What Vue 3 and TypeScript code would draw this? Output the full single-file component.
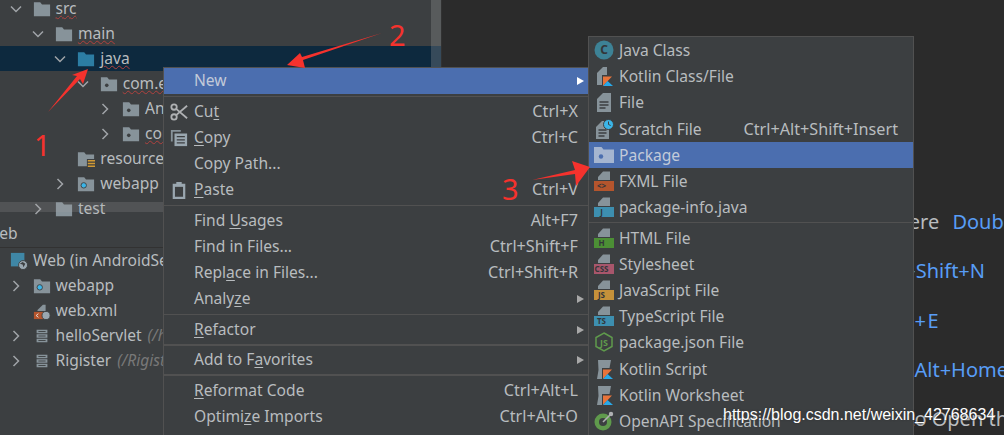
<script setup lang="ts">
type Row = { d: number; label: string; icon: string; chev?: 'down' | 'right'; wavy?: boolean; sel?: boolean; note?: string }
type Item = { sep?: boolean; label?: string; icon?: string; key?: string; more?: boolean; hi?: boolean; band?: string; tag?: string }

const topRows: Row[] = [
  { d: 0, label: 'src', icon: 'folder', chev: 'down', wavy: true },
  { d: 1, label: 'main', icon: 'folder', chev: 'down', wavy: true },
  { d: 2, label: 'java', icon: 'source', chev: 'down', wavy: true, sel: true },
  { d: 3, label: 'com.example', icon: 'pkg', chev: 'down', wavy: true },
  { d: 4, label: 'Android', icon: 'pkg', chev: 'right' },
  { d: 4, label: 'controller', icon: 'pkg', chev: 'right', wavy: true },
  { d: 2, label: 'resources', icon: 'res' },
  { d: 2, label: 'webapp', icon: 'webfolder', chev: 'right' },
  { d: 1, label: 'test', icon: 'folder', chev: 'right' },
]
const lowRows: Row[] = [
  { d: -1, label: 'Web (in AndroidServlet)', icon: 'web' },
  { d: 0, label: 'webapp', icon: 'webfolder', chev: 'right' },
  { d: 0, label: 'web.xml', icon: 'xml' },
  { d: 0, label: 'helloServlet', icon: 'servlet', chev: 'right', note: '(/helloServlet)' },
  { d: 0, label: 'Rigister', icon: 'servlet', chev: 'right', note: '(/Rigister)' },
]
const menu: Item[] = [
  { label: 'New', more: true, hi: true },
  { sep: true },
  { label: 'Cu&t', icon: 'cut', key: 'Ctrl+X' },
  { label: '&Copy', icon: 'copy', key: 'Ctrl+C' },
  { label: 'Copy Path...' },
  { label: '&Paste', icon: 'paste', key: 'Ctrl+V' },
  { sep: true },
  { label: 'Find &Usages', key: 'Alt+F7' },
  { label: 'Find in Files...', key: 'Ctrl+Shift+F' },
  { label: 'Repl&ace in Files...', key: 'Ctrl+Shift+R' },
  { label: 'Analy&ze', more: true },
  { sep: true },
  { label: '&Refactor', more: true },
  { sep: true },
  { label: 'Add to F&avorites', more: true },
  { sep: true },
  { label: '&Reformat Code', key: 'Ctrl+Alt+L' },
  { label: 'Optimi&ze Imports', key: 'Ctrl+Alt+O' },
]
const sub: Item[] = [
  { label: 'Java Class', icon: 'jclass' },
  { label: 'Kotlin Class/File', icon: 'kfile' },
  { label: 'File', icon: 'file' },
  { label: 'Scratch File', icon: 'scratch', key: 'Ctrl+Alt+Shift+Insert' },
  { label: 'Package', icon: 'pkg', hi: true },
  { label: 'FXML File', icon: 'band', band: '#b4552d', tag: '<>' },
  { label: 'package-info.java', icon: 'band', band: '#3d8fb0', tag: 'J' },
  { sep: true },
  { label: 'HTML File', icon: 'band', band: '#4c8f35', tag: 'H' },
  { label: 'Stylesheet', icon: 'band', band: '#a8566c', tag: 'CSS' },
  { label: 'JavaScript File', icon: 'band', band: '#c5913a', tag: 'JS' },
  { label: 'TypeScript File', icon: 'band', band: '#3d8fb0', tag: 'TS' },
  { label: 'package.json File', icon: 'npm' },
  { label: 'Kotlin Script', icon: 'kscript' },
  { label: 'Kotlin Worksheet', icon: 'kscript' },
  { label: 'OpenAPI Specification', icon: 'openapi' },
]
function parts(label = ''): [string, string, string] {
  const i = label.indexOf('&')
  if (i < 0) return [label, '', '']
  return [label.slice(0, i), label.charAt(i + 1), label.slice(i + 2)]
}
const rowPad = (d: number) => {
  const px = `${8.5 + 22.4 * d}px`
  return d < 0 ? { marginLeft: px } : { paddingLeft: px }
}
</script>

<template>
  <div class="screen">
    <aside class="project">
      <div class="tree top">
        <div v-for="r in topRows" :key="r.label" class="row" :class="{ sel: r.sel }" :style="rowPad(r.d)">
          <svg class="chev" viewBox="0 0 14 14"><path v-if="r.chev === 'down'" d="M2 4.5l5 5 5-5" /><path v-else-if="r.chev === 'right'" d="M4.5 2l5 5-5 5" /></svg>
          <svg class="ico" viewBox="0 0 20 20">
            <path :fill="r.icon === 'source' ? '#2c7da3' : '#87939a'" d="M1 2.5h7l2 2.5h9v13H1z" />
            <circle v-if="r.icon === 'pkg'" cx="7.5" cy="11.5" r="2" fill="#3c3f41" />
            <circle v-if="r.icon === 'webfolder'" cx="7.5" cy="11.5" r="3" fill="#3bb5e8" stroke="#3c3f41" />
            <g v-if="r.icon === 'res'"><rect x="11" y="10" width="9" height="9" fill="#3c3f41" /><path d="M12 12h8M12 15h8M12 18h8" stroke="#d19a34" stroke-width="1.7" /></g>
          </svg>
          <span class="name" :class="{ wavy: r.wavy }">{{ r.label }}</span>
        </div>
      </div>
      <div class="pane-title"><span class="name">Web</span></div>
      <div class="tree">
        <div v-for="r in lowRows" :key="r.label" class="row" :style="rowPad(r.d)">
          <svg class="chev" viewBox="0 0 14 14"><path v-if="r.chev === 'right'" d="M4.5 2l5 5-5 5" /></svg>
          <svg class="ico" viewBox="0 0 20 20">
            <g v-if="r.icon === 'web'"><rect x="1" y="1" width="15" height="15" fill="#3f87a6" /><circle cx="14.5" cy="14.5" r="5" fill="#9aa7b0" stroke="#3c3f41" /><path d="M11 13l3 1 1 3 2-4-3-2z" fill="#3c3f41" /></g>
            <g v-else-if="r.icon === 'webfolder'"><path fill="#87939a" d="M1 2.5h7l2 2.5h9v13H1z" /><circle cx="7.5" cy="11.5" r="3" fill="#3bb5e8" stroke="#3c3f41" /></g>
            <g v-else-if="r.icon === 'xml'"><path fill="#87939a" d="M5 9l6-6h3v7H5z" /><rect x="1" y="11" width="12" height="8" fill="#b4552d" /><path d="M6 13l-2.500 2 2.500 2" fill="none" stroke="#e8e8e8" /><circle cx="14.500" cy="15" r="4.500" fill="#9aa7b0" stroke="#3c3f41" /></g>
            <g v-else><path d="M4 3h12v4H4zM4 8h12v4H4zM4 13h12v4H4z" fill="#87939a" /><path d="M6 5h8M6 10h8M6 15h8" stroke="#3c3f41" /></g>
          </svg>
          <span class="name">{{ r.label }}</span>
          <em v-if="r.note" class="note name">{{ r.note }}</em>
        </div>
      </div>
      <div class="vbar"></div>
      <div class="hbar"></div>
    </aside>

    <main class="editor">
      <p class="hint h1">Search Everywhere <b>Double Shift</b></p>
      <p class="hint h2"><b>Ctrl+Shift+N</b></p>
      <p class="hint h3"><b>Ctrl+E</b></p>
      <p class="hint h4"><b>Alt+Home</b></p>
      <p class="hint h5">to Open them</p>
    </main>

    <nav class="menu main-menu">
      <template v-for="(m, i) in menu" :key="i">
        <div v-if="m.sep" class="sep"></div>
        <div v-else class="item" :class="{ hi: m.hi }">
          <svg class="mico" viewBox="0 0 20 20">
            <g v-if="m.icon === 'cut'" fill="none" stroke="#afb1b3" stroke-width="2"><circle cx="4.500" cy="4.500" r="3" /><circle cx="4.500" cy="15.500" r="3" /><path d="M6.800 6.500L19 17M6.800 13.500L19 3" /></g>
            <g v-else-if="m.icon === 'copy'"><path d="M1 1h11v2H3v11H1z" fill="#87939a" /><rect x="5" y="5" width="14" height="14" fill="#9aa7b0" /><path d="M7.500 8.500h9M7.500 12h9M7.500 15.500h9" stroke="#3c3f41" stroke-width="1.300" /></g>
            <g v-else-if="m.icon === 'paste'"><path d="M3 3h4V1h6v2h4v17H3z" fill="#9aa7b0" /><rect x="5.500" y="6.500" width="9" height="11" fill="#3c3f41" /></g>
          </svg>
          <span class="label">{{ parts(m.label)[0] }}<u>{{ parts(m.label)[1] }}</u>{{ parts(m.label)[2] }}</span>
          <span v-if="m.key" class="key">{{ m.key }}</span>
          <i v-if="m.more" class="more"></i>
        </div>
      </template>
    </nav>

    <nav class="menu sub-menu">
      <template v-for="(m, i) in sub" :key="i">
        <div v-if="m.sep" class="sep"></div>
        <div v-else class="item" :class="{ hi: m.hi }">
          <svg class="mico" viewBox="0 0 20 20">
            <g v-if="m.icon === 'jclass'"><circle cx="10" cy="10" r="9.500" fill="#3d8296" /><text x="10" y="14" class="svgtxt big">C</text></g>
            <g v-else-if="m.icon === 'kfile'"><path d="M3 7l6-6h4v18H3z" fill="#87939a" /><path d="M8 9h12l-4.500 5 4.500 6H8z" fill="#3c3f41" /><path d="M9 10.500h9L9 20z" fill="#e8743b" /><path d="M9 20l4.500-5 5.500 5z" fill="#2aa9e8" /></g>
            <g v-else-if="m.icon === 'file'"><path d="M3 7l6-6h8v19H3z" fill="#87939a" /><path d="M5.500 10h9M5.500 13h9M5.500 16h6" stroke="#3c3f41" stroke-width="1.300" /></g>
            <g v-else-if="m.icon === 'scratch'"><path d="M2 8l6-6h7v18H2z" fill="#87939a" /><path d="M4.500 11h8M4.500 14h8M4.500 17h6" stroke="#3c3f41" stroke-width="1.300" /><circle cx="14.500" cy="5.500" r="5" fill="#3bb5e8" stroke="#3c3f41" /><path d="M14.500 2.500v3l2.200 1" fill="none" stroke="#3c3f41" /></g>
            <g v-else-if="m.icon === 'pkg'"><path fill="#a5b5d0" d="M0 2h7.500l2 2.500H20V18H0z" /><circle cx="7" cy="11.500" r="2.200" fill="#4b6eaf" /></g>
            <g v-else-if="m.icon === 'band'"><path d="M4 9V6l5-5.500h7V9z" fill="#87939a" /><rect x="0" y="10" width="20" height="10" :fill="m.band" /><text x="7.500" y="18" class="svgtxt">{{ m.tag }}</text></g>
            <g v-else-if="m.icon === 'npm'"><path d="M10 1l8 4.500v9L10 19l-8-4.500v-9z" fill="none" stroke="#5f9a4c" stroke-width="1.500" /><text x="10" y="13.500" class="svgtxt js">JS</text></g>
            <g v-else-if="m.icon === 'kscript'"><path d="M4 1h13l-1.500 8L14 20H3l1.500-9z" fill="#87939a" /><path d="M8 9h12l-4.500 5 4.500 6H8z" fill="#3c3f41" /><path d="M9 10.500h9L9 20z" fill="#e8743b" /><path d="M9 20l4.500-5 5.500 5z" fill="#2aa9e8" /></g>
            <g v-else-if="m.icon === 'openapi'"><circle cx="9" cy="11" r="8.500" fill="#5f9a4c" /><circle cx="9" cy="11" r="4" fill="#3c3f41" /><path d="M9 11L17 3" stroke="#afb1b3" stroke-width="1.600" /><circle cx="17" cy="3" r="2.200" fill="#afb1b3" /></g>
          </svg>
          <span class="label">{{ m.label }}</span>
          <span v-if="m.key" class="key">{{ m.key }}</span>
        </div>
      </template>
    </nav>

    <svg class="marks" viewBox="0 0 1004 435">
      <path d="M48 112L77 76 72 75 88 69 83 84 80 79z" />
      <path d="M382 33L303 60 305 68 287 65 300 53 302 57z" />
      <path d="M532 180L575 170 572 161 590 167 576 186 575 174z" />
      <text x="34" y="156">1</text>
      <text x="389" y="46">2</text>
      <text x="502" y="200">3</text>
    </svg>
    <span class="mark-url">https://blog.csdn.net/weixin_42768634</span>
  </div>
</template>

<style>
html, body { margin: 0; background: #2b2b2b; }
</style>

<style scoped>
.screen {
  position: relative;
  width: 1004px;
  height: 435px;
  overflow: hidden;
  display: flex;
  background: #2b2b2b;
  font-family: "Noto Sans", sans-serif;
  font-size: 15.600px;
  color: #b8bcbf;
}
.project {
  position: relative;
  flex: 0 0 441px;
  background: #3c3f41;
  border-right: 1px solid #323232;
  overflow: hidden;
}
.tree.top { margin-top: -4px; }
.row {
  position: relative;
  display: flex;
  align-items: center;
  height: 25px;
  white-space: nowrap;
}
.row.sel { background: #0d293e; }
.chev { flex: 0 0 14px; width: 14px; height: 14px; margin-right: 10px; }
.chev path { fill: none; stroke: #a0a4a8; stroke-width: 1.500; }
.ico { flex: 0 0 18px; width: 18px; height: 18px; margin-right: 5px; }
.name { margin-bottom: 2px; }
.wavy { text-decoration: underline wavy #b0413e 1px; text-underline-offset: 1px; }
.note { margin-left: 6px; color: #787878; }
.pane-title {
  height: 27px;
  display: flex;
  align-items: center;
  border-bottom: 1px solid #323232;
  box-sizing: border-box;
  margin-left: -15px;
}
.vbar {
  position: absolute;
  top: 0;
  right: 0;
  width: 10px;
  height: 67px;
  background: rgba(166, 166, 166, 0.27);
}
.hbar {
  position: absolute;
  left: 0;
  top: 202px;
  width: 200px;
  height: 10px;
  background: rgba(166, 166, 166, 0.2);
}
.editor { flex: 1; min-width: 0; overflow: hidden; padding-top: 208px; }
.hint {
  margin: 0;
  height: 49.250px;
  line-height: 27px;
  font-size: 20px;
  white-space: nowrap;
  color: #b9bcbf;
  text-align: right;
}
.hint b { font-weight: 400; color: #589df6; }
.h1 { margin-right: -64px; }
.h1 b { margin-left: 8px; }
.h2 { margin-right: 19px; }
.h3 { margin-right: 64px; letter-spacing: 1.500px; }
.h4 { margin-right: -4px; }
.h5 { margin-right: -34px; }
.menu {
  position: absolute;
  box-sizing: border-box;
  background: #3c3f41;
  border: 1px solid #515151;
}
.main-menu { left: 163px; top: 67px; width: 426px; height: 380px; }
.sub-menu { left: 588px; top: 36px; width: 326px; height: 420px; }
.item {
  display: flex;
  align-items: center;
  height: 26.200px;
  white-space: nowrap;
  padding-right: 10px;
}
.sub-menu .item { padding-right: 15px; }
.item.hi { background: #4b6eaf; color: #c2cad9; }
.mico { flex: 0 0 18px; width: 18px; height: 18px; margin: 0 6px; }
.sub-menu .mico { flex-basis: 20px; width: 20px; height: 20px; margin: 0 5px 0 5px; }
.label { flex: 1; margin-bottom: 1.500px; }
.sub-menu .label { margin-bottom: 0; }
.label u { text-underline-offset: 2px; }
.key { margin-left: 20px; margin-bottom: 1.500px; font-size: 16.200px; }
.sub-menu .key { margin-bottom: 0; }
.more {
  width: 0;
  height: 0;
  border-left: 7px solid #a8a8a8;
  border-top: 4.500px solid transparent;
  border-bottom: 4.500px solid transparent;
  margin-right: -6px;
}
.item.hi .more { border-left-color: #ffffff; }
.sep { height: 4.250px; display: flex; align-items: center; }
.sep::before { content: ""; flex: 1; height: 1.500px; background: #515151; }
.svgtxt {
  font-family: "Noto Sans", sans-serif;
  font-size: 8px;
  font-weight: 700;
  text-anchor: middle;
  fill: #33363a;
}
.svgtxt.big { font-size: 12px; }
.svgtxt.js { font-size: 9px; fill: #5f9a4c; }
.marks {
  position: absolute;
  inset: 0;
  width: 1004px;
  height: 435px;
  pointer-events: none;
}
.marks path { fill: #f5322d; }
.marks text { font-family: "Noto Sans", sans-serif; font-size: 29px; fill: #f5322d; }
.mark-url {
  position: absolute;
  left: 723px;
  top: 406px;
  font-family: "Liberation Sans", sans-serif;
  font-size: 16px;
  color: #ffffff;
  text-shadow: 0 0 2px #333;
}
</style>
